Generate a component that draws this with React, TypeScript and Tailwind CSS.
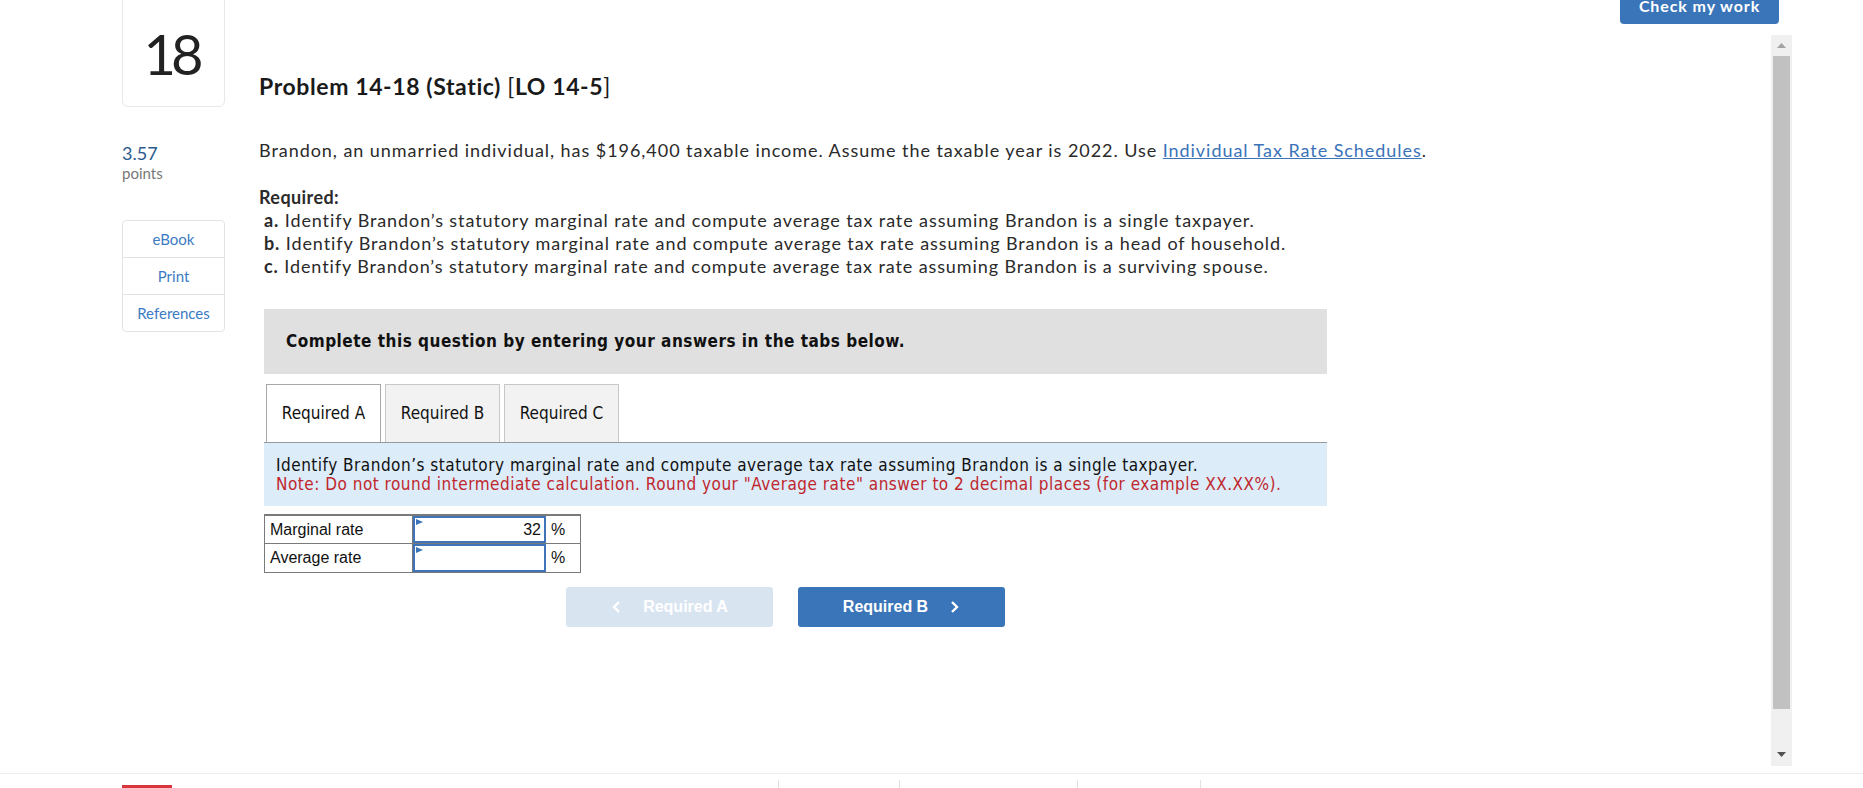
import React from "react";

const lato = { fontFamily: "Lato, 'Open Sans', sans-serif" };
const tah = { fontFamily: "'DejaVu Sans Condensed', 'DejaVu Sans', sans-serif" };
const arial = { fontFamily: "'Liberation Sans', Arial, sans-serif" };

function Corner() {
  return (
    <svg className="absolute left-[1px] top-[1px]" width="7" height="7" viewBox="0 0 7 7">
      <polygon points="0,0 7,3 0,6" fill="#3a73b8" />
    </svg>
  );
}

export default function App() {
  return (
    <div className="w-[1863px] h-[788px] overflow-hidden bg-white flex flex-col text-[#222]" style={lato}>
      <div className="flex h-[773px] shrink-0">
        <aside className="ml-[122px] w-[103px] flex flex-col shrink-0">
          <div className="-mt-[12px] h-[119px] border border-[#e8e8e8] rounded-[6px] flex items-center justify-center pt-[12px]">
            <span className="text-[56px] leading-[56px] tracking-[-5px] text-[#222] pr-[5px]">18</span>
          </div>
          <div className="mt-[35px] text-[18px] leading-[22px] text-[#2b5a8c]">3.57</div>
          <div className="text-[15px] leading-[18px] text-[#777]">points</div>
          <div className="mt-[38px] border border-[#e3e3e3] rounded-[4px] flex flex-col text-[15px] text-[#3c7bc4]">
            <div className="h-[37px] flex items-center justify-center border-b border-[#e3e3e3]">eBook</div>
            <div className="h-[37px] flex items-center justify-center border-b border-[#e3e3e3]">Print</div>
            <div className="h-[36px] flex items-center justify-center">References</div>
          </div>
        </aside>

        <main className="ml-[34px] w-[1250px] flex flex-col shrink-0">
          <h1 className="mt-[72px] text-[23px] leading-[28px] font-bold text-[#1a1a1a] tracking-[0.6px]">
            Problem 14-18 (Static) <span className="font-normal">[</span>LO 14-5<span className="font-normal">]</span>
          </h1>
          <p className="mt-[39px] text-[18px] leading-[22px] text-[#2a2a2a] tracking-[0.95px] whitespace-nowrap">
            Brandon, an unmarried individual, has $196,400 taxable income. Assume the taxable year is 2022. Use{" "}
            <a className="text-[#3b73b9] underline">Individual Tax Rate Schedules</a>.
          </p>
          <div className="mt-[25px] text-[18px] leading-[23px] text-[#2a2a2a] tracking-[0.9px] whitespace-nowrap">
            <div className="font-bold tracking-[0.4px]">Required:</div>
            <div className="pl-[5px]"><span className="font-bold">a.</span> Identify Brandon’s statutory marginal rate and compute average tax rate assuming Brandon is a single taxpayer.</div>
            <div className="pl-[5px]"><span className="font-bold">b.</span> Identify Brandon’s statutory marginal rate and compute average tax rate assuming Brandon is a head of household.</div>
            <div className="pl-[5px]"><span className="font-bold">c.</span> Identify Brandon’s statutory marginal rate and compute average tax rate assuming Brandon is a surviving spouse.</div>
          </div>

          <div className="ml-[5px] w-[1063px] flex flex-col">
            <div className="mt-[31px] h-[65px] bg-[#e0e0e0] flex items-center pl-[22px]" style={tah}>
              <span className="text-[17px] font-bold text-[#111] tracking-[0.5px]">Complete this question by entering your answers in the tabs below.</span>
            </div>

            <div className="mt-[10px] flex gap-[4px] pl-[2px] h-[59px] border-b border-[#9a9a9a]" style={tah}>
              <div className="w-[115px] bg-white border border-b-0 border-[#a8a8a8] flex items-center justify-center text-[17px] text-[#111]">Required A</div>
              <div className="w-[115px] bg-[#f2f2f2] border border-b-0 border-[#c8c8c8] flex items-center justify-center text-[17px] text-[#111]">Required B</div>
              <div className="w-[115px] bg-[#f2f2f2] border border-b-0 border-[#c8c8c8] flex items-center justify-center text-[17px] text-[#111]">Required C</div>
            </div>

            <div className="bg-[#dcecf9] pt-[13px] pb-[12px] pl-[12px] text-[17px] leading-[19px] tracking-[0.5px]" style={tah}>
              <div className="text-[#111]">Identify Brandon’s statutory marginal rate and compute average tax rate assuming Brandon is a single taxpayer.</div>
              <div className="text-[#c0272d]">Note: Do not round intermediate calculation. Round your "Average rate" answer to 2 decimal places (for example XX.XX%).</div>
            </div>

            <div className="mt-[8px] w-[317px] border border-[#7a7a7a] border-t-2 flex flex-col text-[16px] text-[#111]" style={arial}>
              <div className="flex h-[28px] border-b border-[#7a7a7a]">
                <div className="w-[148px] border-r border-[#7a7a7a] flex items-center pl-[5px]">Marginal rate</div>
                <div className="relative w-[133px] border-2 border-[#3f74b8] flex items-center justify-end pr-[3px]">
                  <Corner />
                  32
                </div>
                <div className="flex-1 flex items-center pl-[5px]">%</div>
              </div>
              <div className="flex h-[28px]">
                <div className="w-[148px] border-r border-[#7a7a7a] flex items-center pl-[5px]">Average rate</div>
                <div className="relative w-[133px] border-2 border-[#3f74b8] flex items-center justify-end pr-[3px]">
                  <Corner />
                </div>
                <div className="flex-1 flex items-center pl-[5px]">%</div>
              </div>
            </div>

            <div className="mt-[14px] ml-[302px] flex gap-[25px] font-bold text-[16px] text-white" style={arial}>
              <div className="w-[207px] h-[40px] rounded-[3px] bg-[#d9e4f1] flex items-center justify-center gap-[22px]">
                <svg width="10" height="14" viewBox="0 0 10 14"><path d="M8 2 L3 7 L8 12" fill="none" stroke="#ffffff" strokeWidth="2.4" /></svg>
                <span>Required A</span>
              </div>
              <div className="w-[207px] h-[40px] rounded-[3px] bg-[#3a75b9] flex items-center justify-center gap-[22px]">
                <span>Required B</span>
                <svg width="10" height="14" viewBox="0 0 10 14"><path d="M2 2 L7 7 L2 12" fill="none" stroke="#ffffff" strokeWidth="2.4" /></svg>
              </div>
            </div>
          </div>
        </main>

        <div className="flex-1" />

        <div className="w-[172px] mr-[71px] flex flex-col shrink-0">
          <div className="-mt-[12px] w-[159px] h-[36px] rounded-[4px] bg-[#3a75b9] flex items-center justify-center text-white font-bold text-[16px] tracking-[0.9px]">
            Check my work
          </div>
          <div className="mt-[11px] self-end w-[21px] h-[731px] bg-[#f0f0f0] flex flex-col items-center">
            <div className="h-[21px] flex items-center justify-center">
              <svg width="9" height="5" viewBox="0 0 9 5"><polygon points="0,5 4.5,0 9,5" fill="#a3a3a3" /></svg>
            </div>
            <div className="w-[17px] h-[653px] bg-[#c1c1c1]" />
            <div className="flex-1" />
            <div className="h-[24px] flex items-center justify-center">
              <svg width="9" height="5" viewBox="0 0 9 5"><polygon points="0,0 9,0 4.5,5" fill="#505050" /></svg>
            </div>
          </div>
        </div>
      </div>

      <div className="h-[15px] border-t border-[#ececec] flex items-end">
        <div className="ml-[122px] w-[50px] h-[3px] bg-[#d6363c]" />
        <div className="ml-[606px] w-px h-[8px] bg-[#e2e2e2]" />
        <div className="ml-[120px] w-px h-[8px] bg-[#e2e2e2]" />
        <div className="ml-[177px] w-px h-[8px] bg-[#e2e2e2]" />
        <div className="ml-[122px] w-px h-[8px] bg-[#e2e2e2]" />
      </div>
    </div>
  );
}
